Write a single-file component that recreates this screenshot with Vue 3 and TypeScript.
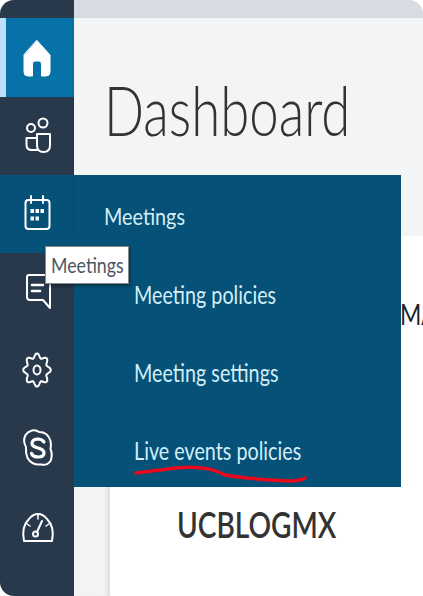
<template>
  <div class="admin-center">
    <nav class="rail">
      <div class="rail-top"></div>
      <a v-for="item in navItems" :key="item.name" class="rail-item" :class="{ home: item.name === 'home', open: item.name === 'meetings' }">
        <svg width="40" height="46" viewBox="0 0 40 46" fill="none" stroke="#fff" stroke-width="2" stroke-linecap="round" stroke-linejoin="round">
          <template v-if="item.name === 'home'">
            <path d="M20 5.500 L33 20 V37 Q33 41 29 41 H24.500 V29 Q24.500 26 22 26 H18 Q15.500 26 15.500 29 V41 H11 Q7 41 7 37 V20 Z" fill="#fff" stroke-width="1" />
          </template>
          <template v-else-if="item.name === 'teams'">
            <circle cx="26" cy="10" r="4.500" />
            <circle cx="14" cy="15" r="4" />
            <path d="M20 21 H33 V32 Q33 39 26.500 39 Q20 39 20 32 Z" />
            <path d="M20 25 H9.500 V32 Q9.500 37 15 37 H21" />
          </template>
          <template v-else-if="item.name === 'meetings'">
            <rect x="8.500" y="9" width="24" height="29" rx="3" />
            <path d="M14 5 V12 M26 5 V12" />
            <path d="M13.500 18h3.500v4h-3.500z M18.500 18h3.500v4h-3.500z M23.500 18h3.500v4h-3.500z M13.500 25.500h3.500v4h-3.500z M18.500 25.500h3.500v4h-3.500z" fill="#fff" stroke="none" />
          </template>
          <template v-else-if="item.name === 'chat'">
            <path d="M12 6 H31 Q33 6 33 8 V39 L26 31 H13 Q10 31 10 28 V8 Q10 6 12 6 Z" />
            <path d="M15 16 H26 M15 22 H23" stroke-width="2.500" />
          </template>
          <template v-else-if="item.name === 'settings'">
            <path :d="gearPath" />
            <ellipse cx="20" cy="23" rx="3.500" ry="4.500" />
          </template>
          <template v-else-if="item.name === 'skype'">
            <path d="M15 5.500 Q19 4.500 22 7 Q31 7 33.500 16 Q34.500 20 33.500 24 Q36 30 33.500 36 Q30 41 24 39.500 Q15 40.500 10.500 33 Q8.500 28 9 22 Q5.500 16 8.500 10 Q11 6.500 15 5.500 Z" />
            <path d="M27 17 Q25 14 20.500 14 Q15 14.500 15 18.500 Q15 21.500 21 23 Q27 24.500 27 28 Q27 32 21 32 Q16 32 14.500 28.500" stroke-width="3.200" />
          </template>
          <template v-else>
            <path d="M7 38 Q4 24 12 16 Q16 11 21 11 Q26 11 30 16 Q38 24 35 38 Z" />
            <path d="M21 11 V16 M10 21 L13 23 M32 21 L29 23" stroke-width="1.500" />
            <circle cx="18.500" cy="31" r="2.500" />
            <path d="M20 29 L25 18" />
          </template>
        </svg>
      </a>
    </nav>

    <main class="content">
      <div class="content-top"></div>
      <header class="page-head">
        <h1>Dashboard</h1>
      </header>
      <section class="page-body">
        <div class="gutter"></div>
        <div class="card">
          <span class="cut-text">MA</span>
          <strong class="tenant">UCBLOGMX</strong>
        </div>
      </section>
    </main>

    <div class="flyout">
      <div class="flyout-title">Meetings</div>
      <a v-for="link in links" :key="link" class="flyout-link">{{ link }}</a>
      <svg class="scribble" width="180" height="24" viewBox="0 0 180 24" fill="none">
        <path d="M4 10 Q20 8 32 6.500 Q50 3.500 65 4.500 Q80 5 93 12 Q115 16 158 18 Q168 18 173 15" stroke="#e8091c" stroke-width="3.500" stroke-linecap="round" />
      </svg>
    </div>

    <div class="tooltip"><span>Meetings</span></div>
  </div>
</template>

<script setup lang="ts">
const navItems = [
  { name: 'home' },
  { name: 'teams' },
  { name: 'meetings' },
  { name: 'chat' },
  { name: 'settings' },
  { name: 'skype' },
  { name: 'analytics' }
];

const links = ['Meeting policies', 'Meeting settings', 'Live events policies'];

// eight rounded teeth, a bit taller than wide like the rest of the rail
function buildGear(): string {
  const points: string[] = [];
  for (let i = 0; i < 96; i++) {
    const angle = (i / 96) * Math.PI * 2;
    const radius = 12 + 1.8 * Math.cos(angle * 8);
    const x = 20 + radius * Math.cos(angle);
    const y = 23 + radius * 1.2 * Math.sin(angle);
    points.push(`${x.toFixed(2)} ${y.toFixed(2)}`);
  }
  return `M${points.join(' L')} Z`;
}

const gearPath = buildGear();
</script>

<style>
html,
body {
  margin: 0;
  background: #fff;
  overflow: hidden;
}
</style>

<style scoped>
.admin-center {
  position: relative;
  display: flex;
  width: 423px;
  height: 596px;
  font-family: Lato, "Liberation Sans", sans-serif;
  overflow: hidden;
}

.rail {
  display: flex;
  flex-direction: column;
  flex: none;
  width: 74px;
  height: 596px;
  background: #29394c;
  border-radius: 14px 0 0 14px;
}

.rail-top {
  height: 18px;
  flex: none;
}

.rail-item {
  display: flex;
  align-items: center;
  justify-content: center;
  flex: none;
  height: 78px;
}

.rail-item.home {
  height: 79px;
  background: #0672a8;
  box-shadow: inset 6px 0 0 #bfe0fa;
}

.rail-item.open {
  background: #055177;
}

.content {
  display: flex;
  flex-direction: column;
  flex: 1;
  min-width: 0;
}

.content-top {
  flex: none;
  height: 18px;
  background: #d7dce3;
  border-top-right-radius: 14px;
}

.page-head {
  flex: none;
  height: 218px;
  box-sizing: border-box;
  padding: 47px 0 0 30px;
  background: #f3f4f6;
  box-shadow: 0 1px 2px rgba(0, 0, 0, 0.12);
}

.page-head h1 {
  display: inline-block;
  margin: 0;
  font-size: 68px;
  line-height: 90px;
  font-weight: 300;
  color: #333;
  white-space: nowrap;
  transform: scaleX(0.775);
  transform-origin: left;
}

.page-body {
  display: flex;
  flex: 1;
  min-height: 0;
}

.gutter {
  flex: none;
  width: 36px;
  background: #f3f4f6;
  box-shadow: inset -6px 0 6px -4px rgba(0, 0, 0, 0.12);
}

.card {
  position: relative;
  flex: 1;
  background: #fff;
}

.cut-text {
  position: absolute;
  left: 290px;
  top: 64px;
  font-size: 28px;
  line-height: 28px;
  color: #1d2433;
  white-space: nowrap;
  transform: scaleX(0.82);
  transform-origin: left;
}

.tenant {
  position: absolute;
  left: 67px;
  top: 266px;
  font-size: 36px;
  line-height: 44px;
  font-weight: 600;
  color: #333;
  transform: scaleX(0.78);
  transform-origin: left;
}

.flyout {
  position: absolute;
  left: 74px;
  top: 175px;
  width: 327px;
  height: 312px;
  display: flex;
  flex-direction: column;
  align-items: flex-start;
  background: #055177;
  color: #d4eef8;
}

.flyout-title {
  margin: 25px 0 0 30px;
  font-size: 23px;
  line-height: 32px;
  transform: scaleX(0.86);
  transform-origin: left;
}

.flyout-link {
  margin: 46px 0 0 60px;
  font-size: 25px;
  line-height: 32px;
  white-space: nowrap;
  transform: scaleX(0.79);
  transform-origin: left;
}

.scribble {
  position: absolute;
  left: 58px;
  top: 288px;
}

.tooltip {
  position: absolute;
  left: 45px;
  top: 246px;
  width: 84px;
  height: 38px;
  box-sizing: border-box;
  padding-left: 5px;
  background: #fff;
  border: 1px solid #8a8a8a;
  box-shadow: 1px 2px 3px rgba(0, 0, 0, 0.4);
  color: #4b5563;
  font-size: 21px;
  line-height: 36px;
}

.tooltip span {
  display: inline-block;
  transform: scaleX(0.845);
  transform-origin: left;
}
</style>
